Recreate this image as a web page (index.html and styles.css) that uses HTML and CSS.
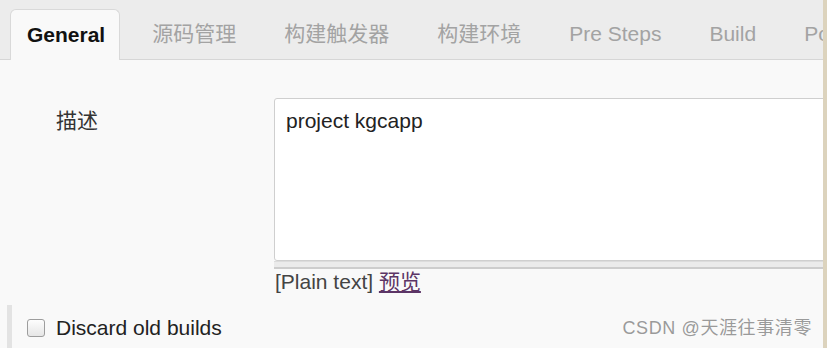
FILE: index.html
```html
<!DOCTYPE html>
<html lang="zh-CN">
<head>
  <meta charset="UTF-8" />
  <title>General</title>
  <link rel="stylesheet" href="styles.css">
</head>
<body>
  <div class="page">
    <div class="tabbar">
      <div class="tab active">General</div>
      <div class="tab">源码管理</div>
      <div class="tab">构建触发器</div>
      <div class="tab">构建环境</div>
      <div class="tab">Pre Steps</div>
      <div class="tab">Build</div>
      <div class="tab">Post Steps</div>
    </div>

    <div class="form-row">
      <div class="form-label">描述</div>
      <div class="form-field">
        <div class="textbox">project kgcapp</div>
        <div class="grip"></div>
        <div class="hint">[Plain text] <a href="#">预览</a></div>
      </div>
    </div>

    <div class="option">
      <span class="checkbox"></span>
      <span class="option-text">Discard old builds</span>
    </div>

    <div class="watermark">CSDN @天涯往事清零</div>
  </div>
  <div class="edge"></div>
</body>
</html>
```

FILE: styles.css
```css
html, body {
  margin: 0;
  padding: 0;
  height: 100%;
}
body {
  display: flex;
  background-color: #f9f9f9;
  font-family: "Liberation Sans", Arial, "Noto Sans CJK SC", sans-serif;
  color: #333;
  overflow: hidden;
}
.page {
  position: relative;
  flex: 1;
  overflow: hidden;
}
.edge {
  width: 4px;
  background-color: #dcd3bd;
}
.tabbar {
  display: flex;
  gap: 16px;
  height: 50px;
  padding: 9px 0 0 10px;
  background-color: #ececec;
  border-bottom: 1px solid #d6d6d6;
  white-space: nowrap;
}
.tab {
  padding: 0 16px;
  font-size: 21px;
  line-height: 50px;
  color: #a3a3a3;
}
.tab.active {
  height: 50px;
  margin-bottom: -1px;
  padding: 0 14px 0 16px;
  font-weight: bold;
  color: #111;
  background-color: #f9f9f9;
  border: 1px solid #d9d9d9;
  border-bottom: none;
  border-radius: 6px 6px 0 0;
}
.form-row {
  display: grid;
  grid-template-columns: 274px 560px;
  padding-top: 38px;
}
.form-label {
  padding: 11px 0 0 56px;
  font-size: 21px;
  line-height: 24px;
}
.textbox {
  height: 151px;
  padding: 10px 11px 0;
  font-size: 21px;
  line-height: 24px;
  color: #222;
  background-color: #fff;
  border: 1px solid #cfcfcf;
  border-radius: 3px 0 0 3px;
}
.grip {
  height: 5px;
  background-color: #ebebeb;
  border-top: 1px solid #dcdcdc;
  border-bottom: 2px solid #cdcdcd;
}
.hint {
  padding: 1px 0 0 1px;
  font-size: 21px;
  line-height: 24px;
  color: #444;
}
.hint a {
  color: #5c3566;
}
.option {
  display: flex;
  align-items: center;
  gap: 11px;
  height: 46px;
  margin: 11px 0 0 7px;
  padding-left: 15px;
  border-left: 5px solid #e3e3e3;
}
.checkbox {
  width: 16px;
  height: 16px;
  background: linear-gradient(#fdfdfd, #e6e6e6);
  border: 1px solid #9d9d9d;
  border-radius: 3px;
}
.option-text {
  font-size: 21px;
  color: #222;
}
.watermark {
  position: absolute;
  right: 11px;
  bottom: 9px;
  font-size: 18px;
  letter-spacing: 0.6px;
  color: #9a9a9a;
  text-shadow: 0 0 1px #fff;
}
```
